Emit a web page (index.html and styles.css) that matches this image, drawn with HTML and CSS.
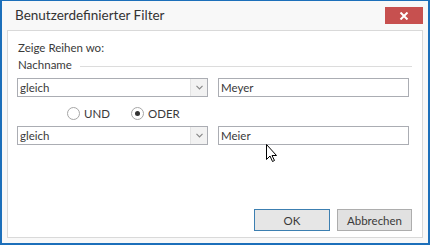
FILE: index.html
```html
<!DOCTYPE html>
<html lang="de">
<head>
<meta charset="utf-8">
<title>Benutzerdefinierter Filter</title>
<link rel="stylesheet" href="styles.css">
</head>
<body>
<div class="window">
  <div class="titlebar">
    <span class="title">Benutzerdefinierter Filter</span>
    <button class="close" type="button" aria-label="Schließen">
      <svg width="10" height="8" viewBox="0 0 10 8"><path d="M1.5 0.5 L8.5 7.5 M8.5 0.5 L1.5 7.5" stroke="#fff" stroke-width="2"/></svg>
    </button>
  </div>

  <div class="panel">
    <p class="caption">Zeige Reihen wo:</p>
    <div class="group">
      <span>Nachname</span>
      <span class="rule"></span>
    </div>

    <div class="row">
      <div class="combo">
        <span class="value">gleich</span>
        <span class="drop"><svg width="7" height="5" viewBox="0 0 7 5"><path d="M0.5 0.8 L3.5 3.8 L6.5 0.8" fill="none" stroke="#888" stroke-width="1.2"/></svg></span>
      </div>
      <div class="edit">Meyer</div>
    </div>

    <div class="radios">
      <label class="radio"><span class="dot"></span>UND</label>
      <label class="radio"><span class="dot on"></span>ODER</label>
    </div>

    <div class="row">
      <div class="combo">
        <span class="value">gleich</span>
        <span class="drop"><svg width="7" height="5" viewBox="0 0 7 5"><path d="M0.5 0.8 L3.5 3.8 L6.5 0.8" fill="none" stroke="#888" stroke-width="1.2"/></svg></span>
      </div>
      <div class="edit">Meier</div>
    </div>

    <div class="buttons">
      <button class="btn default" type="button">OK</button>
      <button class="btn" type="button">Abbrechen</button>
    </div>
  </div>

  <!-- mouse pointer -->
  <svg class="cursor" width="13" height="19" viewBox="0 0 13 19">
    <path d="M0.5 0.5 L0.5 15.5 L4 12 L6.5 17.5 L8.5 16.5 L6 11.5 L10.5 11.5 Z" fill="#fff" stroke="#000" stroke-width="1"/>
  </svg>
</div>
</body>
</html>
```

FILE: styles.css
```css
html, body { margin: 0; padding: 0; }

body { font-family: Lato, 'Liberation Sans', sans-serif; font-size: 11.5px; color: #3a3a3a; }

.window {
  position: relative;
  width: 430px;
  height: 245px;
  box-sizing: border-box;
  border: 2px solid #1c6fba;
  border-top-width: 1px;
  background: #f8f8f8;
  display: flex;
  flex-direction: column;
}

.titlebar {
  height: 29px;
  display: flex;
  align-items: flex-start;
  justify-content: space-between;
  padding: 0 5px 0 13px;
}

.title { font-size: 13.5px; color: #333; margin-top: 6px; }

.close {
  margin-top: 6px;
  width: 38px;
  height: 17px;
  border: 0;
  padding: 0;
  background: #c7504f;
  display: flex;
  align-items: center;
  justify-content: center;
}

.panel {
  margin: 0 5px 5px 5px;
  flex: 1;
  background: #fff;
  border: 1px solid #d9d9d9;
  padding: 0 10px 0 9px;
  display: flex;
  flex-direction: column;
}

.caption { margin: 10px 0 0 1px; line-height: 14px; }

.group { display: flex; align-items: center; margin: 3px 0 0 1px; line-height: 14px; }
.group .rule { flex: 1; height: 1px; background: #dcdcdc; margin: 3px 0 0 8px; }

.row { display: flex; gap: 10px; margin-top: 6px; }

.combo, .edit {
  width: 191px;
  height: 19px;
  box-sizing: border-box;
  border: 1px solid #abadb3;
  background: #fff;
  display: flex;
  align-items: center;
}

.combo .value { flex: 1; padding-left: 2px; }
.combo .drop {
  width: 16px;
  height: 100%;
  border-left: 1px solid #e3e3e3;
  background: #f2f2f2;
  display: flex;
  align-items: center;
  justify-content: center;
}

.edit { padding-left: 2px; }

.radios { display: flex; gap: 21px; margin: 10px 0 0 50px; height: 13px; }
.radio { display: flex; align-items: center; gap: 4px; }
.dot {
  width: 13px;
  height: 13px;
  box-sizing: border-box;
  border: 1px solid #a6a6a6;
  border-radius: 50%;
  background: #fff;
  position: relative;
}
.dot.on::after {
  content: "";
  position: absolute;
  left: 3px;
  top: 3px;
  width: 5px;
  height: 5px;
  border-radius: 50%;
  background: #333;
}

.buttons { margin-top: auto; margin-bottom: 6px; display: flex; justify-content: flex-end; gap: 7px; }

.btn {
  font: inherit;
  width: 75px;
  height: 22px;
  border: 1px solid #adadad;
  background: #e1e1e1;
  color: #3a3a3a;
  padding: 0;
}
.btn.default { width: 76px; border-color: #3c7fb1; background: #e6e6e6; }

.cursor { position: absolute; left: 264px; top: 143px; }
```
